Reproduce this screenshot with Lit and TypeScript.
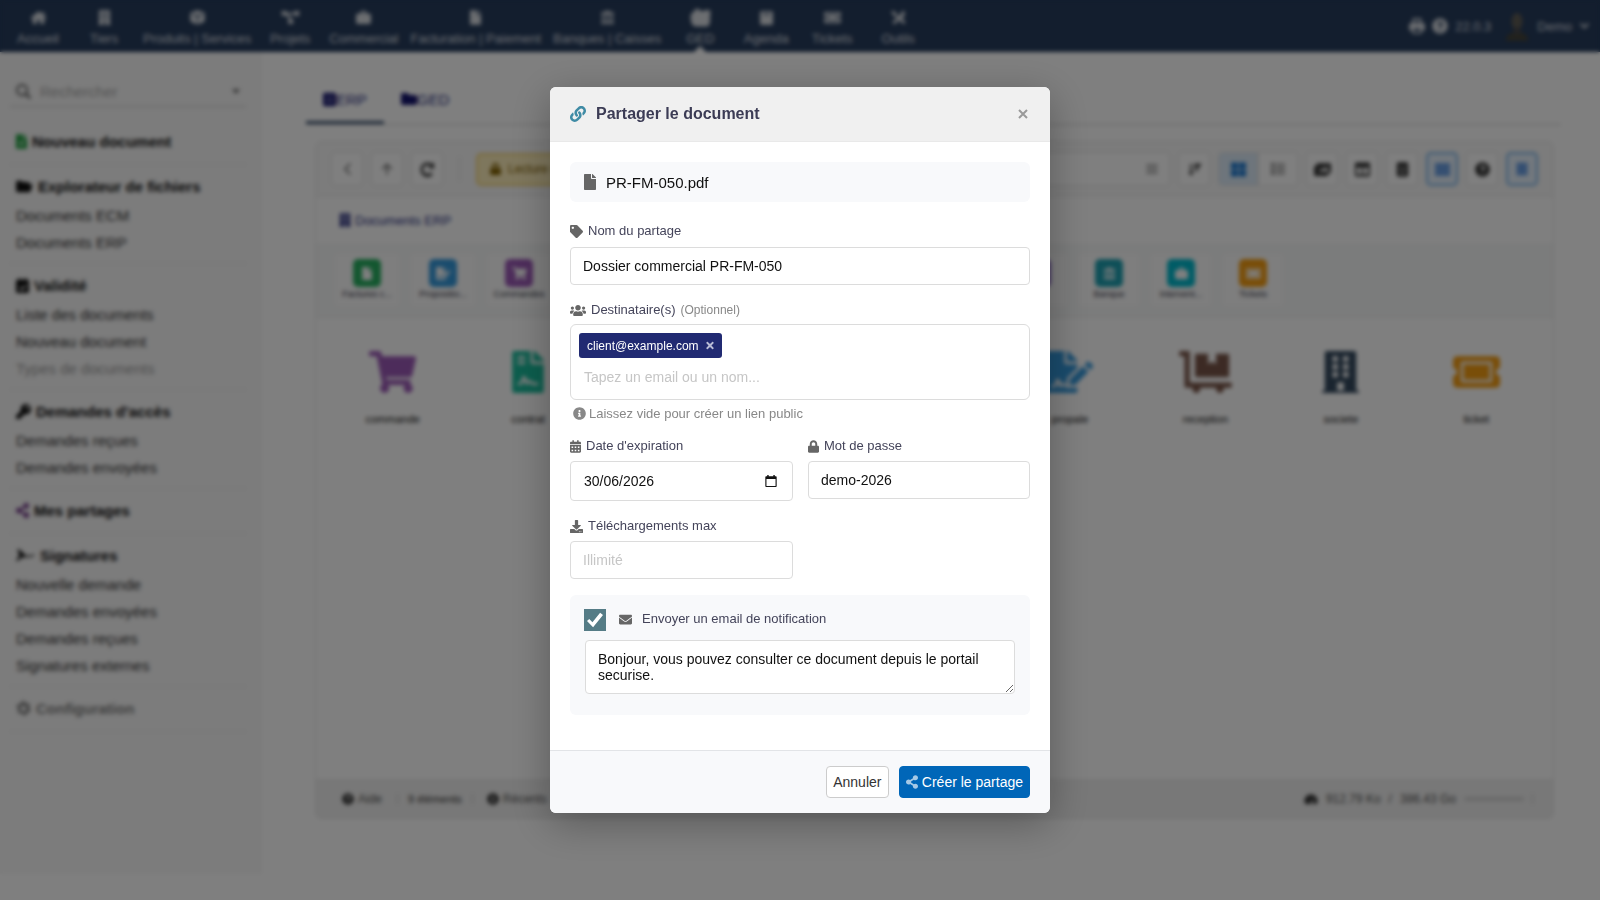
import { LitElement, html, css, svg, nothing } from "lit";
import { customElement, property, state } from "lit/decorators.js";
import { classMap } from "lit/directives/class-map.js";

type Glyph = { w: number; h: number; d: string };

const FILE_FOLD =
  "M377 105L279.100 7c-4.500-4.500-10.600-7-17-7H256v128h128v-6.100c0-6.300-2.500-12.400-7-16.900z";

const GLYPHS: Record<string, Glyph> = {
  link: { w: 512, h: 512, d: "M326.612 185.391c59.747 59.809 58.927 155.698.36 214.59-.11.12-.24.25-.36.37l-67.2 67.2c-59.27 59.27-155.699 59.262-214.96 0-59.27-59.26-59.27-155.7 0-214.96l37.106-37.106c9.84-9.84 26.786-3.3 27.294 10.606.648 17.722 3.826 35.527 9.69 52.721 1.986 5.822.567 12.262-3.783 16.612l-13.087 13.087c-28.026 28.026-28.905 73.66-1.155 101.96 28.024 28.579 74.086 28.749 102.325.51l67.2-67.19c28.191-28.191 28.073-73.757 0-101.83-3.701-3.694-7.429-6.564-10.341-8.569a16.037 16.037 0 0 1-6.947-12.606c-.396-10.567 3.348-21.456 11.698-29.806l21.054-21.055c5.521-5.521 14.182-6.199 20.584-1.731a152.482 152.482 0 0 1 20.522 17.197zM467.547 44.449c-59.261-59.262-155.69-59.27-214.96 0l-67.2 67.2c-.12.12-.25.25-.36.37-58.566 58.892-59.387 154.781.36 214.59a152.454 152.454 0 0 0 20.521 17.196c6.402 4.468 15.064 3.789 20.584-1.731l21.054-21.055c8.35-8.35 12.094-19.239 11.698-29.806a16.037 16.037 0 0 0-6.947-12.606c-2.912-2.005-6.64-4.875-10.341-8.569-28.073-28.073-28.191-73.639 0-101.83l67.2-67.19c28.239-28.239 74.3-28.069 102.325.51 27.75 28.3 26.872 73.934-1.155 101.96l-13.087 13.087c-4.35 4.35-5.769 10.79-3.783 16.612 5.864 17.194 9.042 34.999 9.69 52.721.509 13.906 17.454 20.446 27.294 10.606l37.106-37.106c59.271-59.259 59.271-155.699.001-214.959z" },
  file: { w: 384, h: 512, d: "M224 136V0H24C10.7 0 0 10.7 0 24v464c0 13.3 10.7 24 24 24h336c13.3 0 24-10.7 24-24V160H248c-13.2 0-24-10.8-24-24z" + FILE_FOLD },
  tag: { w: 512, h: 512, d: "M0 252.118V48C0 21.49 21.49 0 48 0h204.118a48 48 0 0 1 33.941 14.059l211.882 211.882c18.745 18.745 18.745 49.137 0 67.882L293.823 497.941c-18.745 18.745-49.137 18.745-67.882 0L14.059 286.059A48 48 0 0 1 0 252.118zM112 64c-26.51 0-48 21.49-48 48s21.49 48 48 48 48-21.49 48-48-21.49-48-48-48z" },
  users: { w: 640, h: 512, d: "M96 224c35.3 0 64-28.7 64-64s-28.7-64-64-64-64 28.7-64 64 28.7 64 64 64zm448 0c35.3 0 64-28.7 64-64s-28.7-64-64-64-64 28.7-64 64 28.7 64 64 64zm32 32h-64c-17.6 0-33.5 7.1-45.1 18.6 40.3 22.1 68.9 62 75.1 109.4h66c17.7 0 32-14.3 32-32v-32c0-35.3-28.7-64-64-64zm-256 0c61.9 0 112-50.1 112-112S381.9 32 320 32 208 82.1 208 144s50.1 112 112 112zm76.8 32h-8.3c-20.8 10-43.9 16-68.5 16s-47.6-6-68.5-16h-8.3C179.6 288 128 339.6 128 403.2V432c0 26.5 21.5 48 48 48h288c26.5 0 48-21.5 48-48v-28.8c0-63.6-51.6-115.2-115.2-115.2zm-223.7-13.4C161.5 263.1 145.6 256 128 256H64c-35.3 0-64 28.7-64 64v32c0 17.7 14.3 32 32 32h65.9c6.3-47.4 34.9-87.3 75.2-109.4z" },
  info: { w: 512, h: 512, d: "M256 8C119.043 8 8 119.083 8 256c0 136.997 111.043 248 248 248s248-111.003 248-248C504 119.083 392.957 8 256 8zm0 110c23.196 0 42 18.804 42 42s-18.804 42-42 42-42-18.804-42-42 18.804-42 42-42zm56 254c0 6.627-5.373 12-12 12h-88c-6.627 0-12-5.373-12-12v-24c0-6.627 5.373-12 12-12h12v-64h-12c-6.627 0-12-5.373-12-12v-24c0-6.627 5.373-12 12-12h64c6.627 0 12 5.373 12 12v100h12c6.627 0 12 5.373 12 12v24z" },
  calendar: { w: 448, h: 512, d: "M0 464c0 26.5 21.5 48 48 48h352c26.5 0 48-21.5 48-48V192H0zM64 256h64v64H64zM192 256h64v64h-64zM320 256h64v64h-64zM64 384h64v64H64zM192 384h64v64h-64zM320 384h64v64h-64zM400 64h-48V16c0-8.8-7.2-16-16-16h-32c-8.800 0-16 7.200-16 16v48H160V16c0-8.800-7.200-16-16-16h-32c-8.800 0-16 7.200-16 16v48H48C21.500 64 0 85.500 0 112v48h448v-48c0-26.500-21.500-48-48-48z" },
  lock: { w: 448, h: 512, d: "M400 224h-24v-72C376 68.2 307.8 0 224 0S72 68.2 72 152v72H48c-26.5 0-48 21.5-48 48v192c0 26.5 21.5 48 48 48h352c26.5 0 48-21.5 48-48V272c0-26.5-21.5-48-48-48zm-104 0H152v-72c0-39.7 32.3-72 72-72s72 32.3 72 72v72z" },
  download: { w: 512, h: 512, d: "M216 0h80c13.3 0 24 10.7 24 24v168h87.7c17.8 0 26.7 21.5 14.1 34.1L269.7 378.3c-7.5 7.5-19.8 7.5-27.3 0L90.1 226.1c-12.6-12.6-3.7-34.1 14.1-34.1H192V24c0-13.3 10.7-24 24-24zm296 376v112c0 13.3-10.7 24-24 24H24c-13.3 0-24-10.7-24-24V376c0-13.3 10.7-24 24-24h146.7l49 49c20.1 20.1 52.5 20.1 72.6 0l49-49H488c13.3 0 24 10.7 24 24zm-124 88c0-11-9-20-20-20s-20 9-20 20 9 20 20 20 20-9 20-20zm64 0c0-11-9-20-20-20s-20 9-20 20 9 20 20 20 20-9 20-20z" },
  envelope: { w: 512, h: 512, d: "M502.3 190.8c3.9-3.1 9.7-.2 9.7 4.7V400c0 26.5-21.5 48-48 48H48c-26.5 0-48-21.5-48-48V195.6c0-5 5.7-7.8 9.7-4.7 22.4 17.4 52.1 39.5 154.1 113.6 21.1 15.4 56.7 47.8 92.2 47.6 35.7.3 72-32.8 92.3-47.6 102-74.1 131.6-96.3 154-113.7zM256 320c23.2.4 56.6-29.2 73.4-41.4 132.7-96.3 142.8-104.7 173.4-128.7 5.8-4.5 9.2-11.5 9.2-18.9v-19c0-26.5-21.5-48-48-48H48c-26.5 0-48 21.5-48 48v19c0 7.4 3.4 14.3 9.2 18.9 30.6 23.9 40.7 32.4 173.4 128.7 16.8 12.2 50.2 41.8 73.4 41.4z" },
  share: { w: 448, h: 512, d: "M352 320c-22.608 0-43.387 7.819-59.79 20.895l-102.486-64.054a96.551 96.551 0 0 0 0-41.683l102.486-64.054C308.613 184.181 329.392 192 352 192c53.019 0 96-42.981 96-96S405.019 0 352 0s-96 42.981-96 96c0 7.158.79 14.13 2.276 20.841L155.79 180.895C139.387 167.819 118.608 160 96 160c-53.019 0-96 42.981-96 96s42.981 96 96 96c22.608 0 43.387-7.819 59.79-20.895l102.486 64.054A96.301 96.301 0 0 0 256 416c0 53.019 42.981 96 96 96s96-42.981 96-96-42.981-96-96-96z" },
  cross: { w: 352, h: 512, d: "M242.72 256l100.07-100.07c12.28-12.28 12.28-32.19 0-44.48l-22.24-22.24c-12.28-12.28-32.19-12.28-44.48 0L176 189.28 75.93 89.21c-12.28-12.28-32.19-12.28-44.48 0L9.21 111.45c-12.28 12.28-12.28 32.19 0 44.48L109.28 256 9.21 356.07c-12.28 12.28-12.28 32.19 0 44.48l22.24 22.24c12.28 12.28 32.2 12.28 44.48 0L176 322.72l100.07 100.07c12.28 12.28 32.2 12.28 44.48 0l22.24-22.24c12.28-12.28 12.28-32.19 0-44.48L242.72 256z" },
  cart: { w: 576, h: 512, d: "M528.12 301.319l47.273-208C578.806 78.301 567.391 64 551.99 64H159.208l-9.166-44.81C147.758 8.021 137.93 0 126.529 0H24C10.745 0 0 10.745 0 24v16c0 13.255 10.745 24 24 24h69.883l70.248 343.435C147.325 417.1 136 435.222 136 456c0 30.928 25.072 56 56 56s56-25.072 56-56c0-15.674-6.447-29.835-16.824-40h209.647C430.447 426.165 424 440.326 424 456c0 30.928 25.072 56 56 56s56-25.072 56-56c0-22.172-12.888-41.332-31.579-50.405l5.517-24.276c3.413-15.018-8.002-29.319-23.403-29.319H218.117l-6.545-32h293.145c11.206 0 20.92-7.754 23.403-18.681z" },
  contract: { w: 384, h: 512, d: "M224 136V0H24C10.7 0 0 10.7 0 24v464c0 13.3 10.7 24 24 24h336c13.3 0 24-10.7 24-24V160H248c-13.2 0-24-10.8-24-24zM64 72c0-4.42 3.58-8 8-8h80c4.42 0 8 3.58 8 8v16c0 4.42-3.58 8-8 8H72c-4.42 0-8-3.58-8-8V72zm0 64c0-4.42 3.58-8 8-8h80c4.42 0 8 3.58 8 8v16c0 4.42-3.58 8-8 8H72c-4.42 0-8-3.58-8-8v-16zm192.81 248H304c8.84 0 16 7.16 16 16s-7.16 16-16 16h-47.19c-16.45 0-31.27-9.14-38.64-23.86-2.95-5.92-8.09-6.52-10.17-6.52s-7.22.59-10.02 6.19l-7.67 15.34a15.986 15.986 0 0 1-14.31 8.84c-.38 0-.75-.02-1.14-.05-6.45-.45-12-4.75-14.03-10.89L144 354.59l-10.61 31.88c-5.89 17.66-22.38 29.53-41 29.53H80c-8.84 0-16-7.16-16-16s7.16-16 16-16h12.39c4.83 0 9.11-3.08 10.64-7.66l18.19-54.64c3.3-9.81 12.44-16.41 22.78-16.41s19.48 6.59 22.77 16.41l13.88 41.64c19.77-16.19 54.05-9.7 66 14.16 2.02 4.06 5.96 6.5 10.16 6.5z" + FILE_FOLD },
  signature: { w: 576, h: 512, d: "M218.17 424.14c-2.95-5.92-8.09-6.52-10.17-6.52s-7.22.59-10.02 6.19l-7.67 15.34c-6.37 12.78-25.03 11.37-29.48-2.09L144 386.59l-10.61 31.88c-5.89 17.66-22.38 29.53-41 29.53H80c-8.84 0-16-7.16-16-16s7.16-16 16-16h12.39c4.83 0 9.11-3.08 10.64-7.66l18.19-54.64c3.3-9.81 12.44-16.41 22.78-16.41s19.48 6.59 22.77 16.41l13.88 41.64c19.75-16.19 54.06-9.7 66 14.16 1.89 3.78 5.49 5.95 9.36 6.26v-82.12l128-127.09V160H248c-13.2 0-24-10.8-24-24V0H24C10.7 0 0 10.7 0 24v464c0 13.3 10.7 24 24 24h336c13.3 0 24-10.7 24-24v-40l-128-.11c-16.12-.31-30.58-9.28-37.83-23.75zM384 121.9c0-6.3-2.5-12.4-7-16.9L279.1 7c-4.5-4.5-10.6-7-17-7H256v128h128v-6.1zm-96 225.06V416h68.99l161.68-162.78-67.88-67.88L288 346.96zm280.54-179.63l-31.87-31.87c-9.94-9.94-26.07-9.94-36.01 0l-27.25 27.25 67.88 67.88 27.25-27.25c9.95-9.94 9.95-26.07 0-36.01z" },
  flatbed: { w: 640, h: 512, d: "M208 320h384c8.8 0 16-7.2 16-16V48c0-8.8-7.2-16-16-16H448v128l-48-32-48 32V32H208c-8.8 0-16 7.2-16 16v256c0 8.8 7.2 16 16 16zm416 64H128V16c0-8.8-7.2-16-16-16H16C7.2 0 0 7.2 0 16v32c0 8.8 7.2 16 16 16h48v368c0 8.8 7.2 16 16 16h82.9c-1.8 5-2.9 10.4-2.9 16 0 26.5 21.5 48 48 48s48-21.5 48-48c0-5.6-1.2-11-2.9-16H451c-1.8 5-2.9 10.4-2.9 16 0 26.5 21.5 48 48 48s48-21.5 48-48c0-5.6-1.2-11-2.9-16H624c8.8 0 16-7.2 16-16v-32c0-8.8-7.2-16-16-16z" },
  building: { w: 448, h: 512, d: "M436 480h-20V24c0-13.300-10.700-24-24-24H56C42.700 0 32 10.700 32 24v456H12c-6.600 0-12 5.400-12 12v20h448v-20c0-6.600-5.400-12-12-12zM128 64h64v64h-64zM256 64h64v64h-64zM128 160h64v64h-64zM256 160h64v64h-64zM128 256h64v64h-64zM256 256h64v64h-64zM184 384h80v96h-80z" },
  ticket: { w: 576, h: 512, d: "M128 160h320v192H128V160zm400 96c0 26.51 21.49 48 48 48v96c0 26.51-21.49 48-48 48H48c-26.51 0-48-21.49-48-48v-96c26.51 0 48-21.49 48-48s-21.49-48-48-48v-96c0-26.51 21.49-48 48-48h480c26.51 0 48 21.49 48 48v96c-26.51 0-48 21.49-48 48zm-48-104c0-13.255-10.745-24-24-24H120c-13.255 0-24 10.745-24 24v208c0 13.255 10.745 24 24 24h336c13.255 0 24-10.745 24-24V152z" },
  home: { w: 576, h: 512, d: "M288 40L10 270l30 36 48-40v190c0 13 11 24 24 24h124V340h104v140h124c13 0 24-11 24-24V266l48 40 30-36-78-64V64h-64v76z" },
  cube: { w: 512, h: 512, d: "M240 8L40 84c-20 8-32 26-32 46v230c0 18 10 35 26 43l206 103V240L80 180l20-44 156 60 156-60 20 44-160 60v266l206-103c16-8 26-25 26-43V130c0-20-12-38-32-46L272 8c-10-4-22-4-32 0z" },
  project: { w: 640, h: 512, d: "M20 30h170v66h260V30h170v170H450v-40H262l86 150h62v170H240V310h30L190 190v10H20z" },
  suitcase: { w: 512, h: 512, d: "M160 120V72c0-26 22-48 48-48h96c26 0 48 22 48 48v48h96c36 0 64 28 64 64v232c0 36-28 64-64 64H64c-36 0-64-28-64-64V184c0-36 28-64 64-64zm56 0h80V80h-80z" },
  bank: { w: 512, h: 512, d: "M256 20L30 100v50h452v-50zM70 180h70v200H70zM221 180h70v200h-70zM372 180h70v200h-70zM40 400h432v80H40z" },
  agenda: { w: 448, h: 512, d: "M48 40h352c26 0 48 22 48 48v376c0 26-22 48-48 48H48c-26 0-48-22-48-48V88c0-26 22-48 48-48zM100 130v40h248v-40z" },
  tools: { w: 512, h: 512, d: "M60 20l130 90 10 60 60 50 150-200 60 30-30 70 60 20-120 140 120 140-70 70-160-150L130 492l-90-70 160-150-60-70-60-10L10 70z" },
  gedStack: { w: 576, h: 512, d: "M60 110h40l30-60 60-40 60 20 30 50h110l30-30h90l56 30-16 180 0 150-60 90H150c-60-10-110-60-120-130L10 220z" },
  folders: { w: 576, h: 512, d: "M48 60h130l48 44h180c26 0 48 22 48 48v30l110 0-60 220c-6 30-30 50-60 50H48c-26 0-48-22-48-48V108c0-26 22-48 48-48z" },
  folder: { w: 512, h: 512, d: "M464 128H272l-64-64H48C21.490 64 0 85.490 0 112v288c0 26.510 21.490 48 48 48h416c26.510 0 48-21.490 48-48V176c0-26.510-21.490-48-48-48z" },
  database: { w: 448, h: 512, d: "M64 20h320c36 0 64 26 64 60v350c0 34-28 62-64 62H64c-36 0-64-28-64-62V80c0-34 28-60 64-60zM90 150v30h268v-30zM90 300v30h268v-30z" },
  fileAdd: { w: 384, h: 512, d: "M224 136V0H24C10.7 0 0 10.7 0 24v464c0 13.3 10.7 24 24 24h336c13.3 0 24-10.7 24-24V160H248c-13.2 0-24-10.8-24-24zM170 230h44v70h70v44h-70v70h-44v-70h-70v-44h70z" + FILE_FOLD },
  calCheck: { w: 448, h: 512, d: "M48 60h48V0h60v60h136V0h60v60h48c26 0 48 22 48 48v356c0 26-22 48-48 48H48c-26 0-48-22-48-48V108c0-26 22-48 48-48zM200 440l170-170-36-36-134 134-70-70-36 36z" },
  key: { w: 512, h: 512, d: "M512 176C512 273 433 352 336 352c-11 0-22-1-33-3l-24 27c-4 5-11 8-18 8h-37v40c0 13-11 24-24 24h-40v40c0 13-11 24-24 24H24c-13 0-24-11-24-24v-78c0-6 3-12 7-17l162-162c-6-17-9-36-9-55C160 79 239 0 336 0s176 79 176 176zM336 128c0 27 21 48 48 48s48-21 48-48-21-48-48-48-48 21-48 48z" },
  scribble: { w: 640, h: 512, d: "M40 50l60-10 190 170 50 70 60-50 70 40 140-60 20 40-160 70-80-40-90 60-70-40-190 150-40-30 110-160z" },
  gear: { w: 512, h: 512, d: "M210 10h92l14 60 50 24 56-26 60 74-36 56 8 60 50 40-40 84-62-2-40 40-12 70-92 4-34-60-52-20-60 20-60-74 30-54-10-56-56-38 34-90 66 0 42-44zM256 160a96 96 0 1 0 0 192 96 96 0 1 0 0-192z" },
  help: { w: 512, h: 512, d: "M256 8a248 248 0 1 0 0 496 248 248 0 1 0 0-496zM170 200c4-50 40-84 92-84 50 0 90 32 90 80 0 50-62 66-66 102h-60c0-64 60-70 60-100 0-34-56-30-60 8zM225 340h62v56h-62z" },
  print: { w: 512, h: 512, d: "M110 10h292v150h40c38 0 66 28 66 66v170H410v106H102V396H4V226c0-38 28-66 66-66h40zM170 70v90h172V70zM160 340v104h192V340z" },
  cloud: { w: 512, h: 512, d: "M70 440C20 400 0 340 20 270 50 160 140 90 256 90s206 70 236 180c20 70 0 130-50 170H320l20-190-60 60-24 130z" },
  chevronLeft: { w: 320, h: 512, d: "M240 40l44 44-172 172 172 172-44 44L24 256z" },
  arrowUp: { w: 448, h: 512, d: "M224 40l200 200-44 44-124-124v310h-64V160L68 284l-44-44z" },
  refresh: { w: 512, h: 512, d: "M400 60l80-40v200H280l80-70c-90-80-260-20-260 110 0 140 170 200 270 100l70 70C280 600 20 490 20 256 20 50 240-50 400 60z" },
  list: { w: 512, h: 512, d: "M20 60h472v70H20zM20 220h472v70H20zM20 380h472v70H20z" },
  sort: { w: 512, h: 512, d: "M90 40h70v320h70L120 500 10 360h80zM260 30h250v80L360 200h-100zM260 240h150v70H260z" },
  grid: { w: 512, h: 512, d: "M0 20h240v220H0zM272 20h240v220H272zM0 272h240v220H0zM272 272h240v220H272z" },
  listItems: { w: 512, h: 512, d: "M0 40h130v110H0zM180 60h332v70H180zM0 200h130v110H0zM180 220h332v70H180zM0 360h130v110H0zM180 380h332v70H180z" },
  images: { w: 576, h: 512, d: "M130 40h400c26 0 46 20 46 46v260c0 26-20 46-46 46H470v40c0 26-20 46-46 46H46c-26 0-46-20-46-46V170c0-26 20-46 46-46h40V86c0-26 18-46 44-46zM150 320h370L410 150l-90 110-60-50z" },
  windowIcon: { w: 512, h: 512, d: "M48 20h416c26 0 48 22 48 48v376c0 26-22 48-48 48H48c-26 0-48-22-48-48V68c0-26 22-48 48-48zM60 190v230h170V190zM282 190v230h170V190z" },
  trash: { w: 448, h: 512, d: "M60 10h330l30 50v380c0 36-28 62-64 62H92c-36 0-64-26-64-62V60zM130 180v80h60v-80zM260 180v80h60v-80zM150 360v50h150v-50z" },
  table: { w: 512, h: 512, d: "M0 40h512v130H0zM0 190h512v130H0zM0 340h512v130H0z" },
  panel: { w: 448, h: 512, d: "M20 20h408v130H20zM20 170h408v170H20zM20 360h408v130H20z" },
  search: { w: 512, h: 512, d: "M505 442.700L405.300 343c-4.500-4.500-10.600-7-17-7H372c27.600-35.300 44-79.700 44-128C416 93.100 322.900 0 208 0S0 93.100 0 208s93.100 208 208 208c48.300 0 92.700-16.400 128-44v16.300c0 6.400 2.500 12.500 7 17l99.700 99.700c9.400 9.400 24.600 9.400 33.900 0l28.300-28.300c9.400-9.400 9.400-24.600.1-34zM208 352a144 144 0 1 1 0-288 144 144 0 0 1 0 288z" },
  caret: { w: 320, h: 512, d: "M0 170h320L160 350z" },
  chevronDown: { w: 448, h: 512, d: "M30 180l54-60 140 150 140-150 54 60-194 204z" },
  dateBox: { w: 512, h: 512, d: "M96 0h60v48h200V0h60v48h48c20 0 34 14 34 34v396c0 20-14 34-34 34H48c-20 0-34-14-34-34V82c0-20 14-34 34-34h48zM62 170v294h388V170z" },
};

@customElement("ui-icon")
export class UiIcon extends LitElement {
  @property() name = "file";
  @property({ type: Number }) size = 14;

  static styles = css`
    :host { display: inline-flex; flex: none; }
    svg { display: block; fill: currentColor; fill-rule: evenodd; }
  `;

  render() {
    const g = GLYPHS[this.name];
    if (!g) return nothing;
    return html`<svg aria-hidden="true" height=${this.size} width=${Math.round((this.size * g.w) / g.h)}
      viewBox="0 0 ${g.w} ${g.h}">${svg`<path d=${g.d}></path>`}</svg>`;
  }
}

const NAV: [string, string][] = [
  ["home", "Accueil"], ["building", "Tiers"], ["cube", "Produits | Services"], ["project", "Projets"],
  ["suitcase", "Commercial"], ["file", "Facturation | Paiement"], ["bank", "Banques | Caisses"],
  ["gedStack", "GED"], ["agenda", "Agenda"], ["ticket", "Tickets"], ["tools", "Outils"],
];

@customElement("app-topbar")
export class AppTopbar extends LitElement {
  static styles = css`
    :host { display: flex; justify-content: space-between; height: 52px; padding: 0 10px 0 5px; background: #263c5c; color: #d8dce2; font-size: 13px; }
    nav { display: flex; }
    a { color: inherit; text-decoration: none; }
    .entry { display: flex; flex-direction: column; align-items: center; min-width: 66px; box-sizing: border-box; padding: 9px 6px 0; line-height: 16px; white-space: nowrap; }
    .glyph { display: flex; align-items: center; height: 16px; margin-bottom: 6px; }
    .entry.active::after { content: ""; border: 6px solid transparent; border-top: 0; border-bottom-color: #fff; margin-top: -1px; }
    .right { display: flex; align-items: center; gap: 7px; }
    .avatar { width: 26px; height: 32px; margin-left: 6px; display: block; }
  `;

  render() {
    return html`
      <nav>
        ${NAV.map(([icon, label]) => html`
          <a href="#" class=${classMap({ entry: true, active: label === "GED" })}>
            <span class="glyph"><ui-icon name=${icon} size=${label === "GED" ? 19 : 15}></ui-icon></span>
            <span>${label}</span>
          </a>`)}
      </nav>
      <div class="right">
        <ui-icon name="print" size="16"></ui-icon>
        <ui-icon name="help" size="16"></ui-icon>
        <span>22.0.3</span>
        <svg class="avatar" viewBox="0 0 28 32" aria-hidden="true">
          <ellipse cx="14" cy="11" rx="6" ry="9" fill="#5f5c55"></ellipse>
          <path d="M2 32c0-7 6-9 12-9s12 2 12 9z" fill="#454338"></path>
          <path d="M10 18h8v7h-8z" fill="#45464a"></path>
        </svg>
        <span>Demo</span>
        <ui-icon name="chevronDown" size="12"></ui-icon>
      </div>
    `;
  }
}

type Section = { icon: string; tone?: string; title: string; items?: string[] };

const SECTIONS: Section[] = [
  { icon: "fileAdd", tone: "green", title: "Nouveau document" },
  { icon: "folders", title: "Explorateur de fichiers", items: ["Documents ECM", "Documents ERP"] },
  { icon: "calCheck", title: "Validité", items: ["Liste des documents", "Nouveau document", "Types de documents"] },
  { icon: "key", title: "Demandes d'accès", items: ["Demandes reçues", "Demandes envoyées"] },
  { icon: "share", tone: "violet", title: "Mes partages" },
  { icon: "scribble", title: "Signatures", items: ["Nouvelle demande", "Demandes envoyées", "Demandes reçues", "Signatures externes"] },
  { icon: "gear", tone: "muted", title: "Configuration" },
];

@customElement("app-sidebar")
export class AppSidebar extends LitElement {
  static styles = css`
    :host { display: block; width: 261px; box-sizing: border-box; flex: none; background: #f8f8f8; border-right: 1px solid #efefef; padding: 24px 14px 0 10px; font-size: 15px; color: #333; }
    .search { display: flex; align-items: center; gap: 9px; height: 30px; margin-bottom: 13px; padding: 0 6px; border-bottom: 1px solid #ccc; color: #666; }
    input { flex: 1; min-width: 0; border: 0; padding: 0; background: none; font: inherit; font-size: 15px; }
    input::placeholder { color: #a8a8a8; }
    section { padding: 8px 6px 7px; border-bottom: 1px solid #ececec; }
    .title { display: flex; align-items: center; gap: 5px; height: 27px; margin: 0 0 2px; font-size: 15px; font-weight: bold; color: #111; white-space: nowrap; }
    .title.muted { color: #808080; }
    .green { color: #1e9e3e; }
    .violet { color: #6c3082; }
    a { display: block; line-height: 27px; color: #333; text-decoration: none; }
    a.off { color: #9a9a9a; }
  `;

  render() {
    return html`
      <div class="search">
        <ui-icon name="search" size="15"></ui-icon>
        <input type="text" placeholder="Rechercher" aria-label="Rechercher" />
        <ui-icon name="caret" size="13"></ui-icon>
      </div>
      ${SECTIONS.map((s) => html`
        <section>
          <h2 class=${classMap({ title: true, muted: s.tone === "muted" })}>
            <ui-icon class=${s.tone ?? ""} name=${s.icon} size="15"></ui-icon>${s.title}
          </h2>
          ${(s.items ?? []).map((i) => html`<a href="#" class=${i.startsWith("Types") ? "off" : ""}>${i}</a>`)}
        </section>`)}
    `;
  }
}

type Tile = { icon?: string; label?: string; color?: string; wide?: boolean };

const TILES: Tile[] = [
  { icon: "file", label: "Factures c...", color: "#27ae60", wide: true },
  { icon: "signature", label: "Propositio...", color: "#3498db", wide: true },
  { icon: "cart", label: "Commandes", color: "#9b59b6", wide: true },
  { wide: true }, { wide: true }, { wide: true }, {}, {}, {},
  { color: "#8e6fc8" },
  { icon: "bank", label: "Banque", color: "#1d9fb0" },
  { icon: "suitcase", label: "Intervent...", color: "#00b8cc" },
  { icon: "ticket", label: "Tickets", color: "#f39c12" },
];

const FOLDERS: Tile[] = [
  { icon: "cart", label: "commande", color: "#9b59b6" },
  { icon: "contract", label: "contrat", color: "#1abc9c" },
  {}, {}, {},
  { icon: "signature", label: "propale", color: "#3498db" },
  { icon: "flatbed", label: "reception", color: "#795548" },
  { icon: "building", label: "societe", color: "#34495e" },
  { icon: "ticket", label: "ticket", color: "#f39c12" },
];

@customElement("app-explorer")
export class AppExplorer extends LitElement {
  static styles = css`
    :host { display: flex; flex-direction: column; flex: 1; min-width: 0; padding: 23px 39px 81px 45px; background: #fff; }
    button { font: inherit; color: #333; background: #fff; border: 1px solid #e2e2e2; border-radius: 5px; padding: 0; display: flex; align-items: center; justify-content: center; box-sizing: border-box; }
    .tabs { display: flex; border-bottom: 1px solid #ccc; height: 49px; font-size: 15px; }
    .tab { display: flex; align-items: center; padding: 2px 17px 0; border-bottom: 3px solid transparent; color: #2a2f80; text-decoration: none; }
    .tab.on { border-bottom-color: #3b5170; }
    .tab ui-icon { color: #14146e; }
    .panel { display: flex; flex-direction: column; flex: 1; margin: 16px 7px 0 9px; border: 1px solid #e6e6e6; border-radius: 6px; overflow: hidden; }
    .toolbar { display: flex; align-items: center; gap: 8px; height: 54px; padding: 0 15px; background: #f8f8f8; border-bottom: 1px solid #e8e8e8; }
    .toolbar button { width: 32px; height: 34px; }
    .toolbar button.dim { color: #777; }
    .toolbar button.on { border: 2px solid #7ab4e8; background: #e6f1fc; color: #5a94e0; }
    .rule { width: 1px; height: 24px; background: #e0e0e0; margin: 0 8px; }
    .badge { display: flex; align-items: center; gap: 7px; height: 33px; box-sizing: border-box; padding: 0 12px; border: 2px solid #f5d77a; border-radius: 5px; background: #fdeebb; color: #806000; font-size: 12px; white-space: nowrap; }
    .find { flex: 1; display: flex; align-items: center; justify-content: flex-end; height: 34px; box-sizing: border-box; padding-right: 11px; border: 1px solid #e2e2e2; border-radius: 5px; background: #fff; color: #777; }
    .switch { display: flex; margin: 0; }
    .toolbar .switch button { width: 40px; border-radius: 0 5px 5px 0; color: #777; }
    .toolbar .switch button.sel { border-radius: 5px 0 0 5px; background: #dcebf8; color: #1c78d0; }
    .crumb { display: flex; align-items: center; gap: 4px; height: 46px; padding: 0 23px; color: #2a2f80; font-size: 13px; }
    .tiles { display: flex; gap: 12px; height: 75px; box-sizing: border-box; align-items: center; padding: 0 19px; background: #f7f8f8; border-bottom: 1px solid #eaecec; }
    .tile { width: 60px; height: 52px; flex: none; display: flex; flex-direction: column; align-items: center; gap: 2px; box-sizing: border-box; padding-top: 5px; border-radius: 4px; font-size: 9px; line-height: 11px; color: #334; white-space: nowrap; }
    .tile.wide { width: 64px; }
    .tile.full { background: #fcfcfc; }
    .chip { display: flex; align-items: center; justify-content: center; width: 28px; height: 28px; border-radius: 5px; color: #fff; }
    .folders { flex: 1; display: grid; grid-template-columns: repeat(9, 1fr); gap: 12px; align-content: start; padding: 33px 15px; font-size: 11px; color: #111; }
    .folder { display: flex; flex-direction: column; align-items: center; gap: 19px; line-height: 14px; }
    .status { display: flex; align-items: center; gap: 10px; height: 38px; padding: 0 20px 0 26px; background: #f0f0f0; border-top: 1px solid #e8e8e8; font-size: 12px; color: #555; }
    .status span { display: flex; align-items: center; gap: 4px; }
    .status ui-icon { color: #333; }
    .status .small { font-size: 11px; color: #333; }
    .tick { width: 1px; height: 10px; background: #ccc; }
    .status .pair { margin: 0 5px 0 0; }
    .status .recent { margin-left: 4px; }
    .quota { display: flex; align-items: center; gap: 8px; margin-left: auto; }
    .meter { width: 60px; height: 4px; border-radius: 2px; background: #d4d4d4; }
  `;

  render() {
    return html`
      <div class="tabs">
        <a class="tab on" href="#"><ui-icon name="database" size="15"></ui-icon>ERP</a>
        <a class="tab" href="#"><ui-icon name="folder" size="16"></ui-icon>GED</a>
      </div>
      <div class="panel">
        <div class="toolbar">
          <button class="dim" aria-label="Retour"><ui-icon name="chevronLeft" size="14"></ui-icon></button>
          <button class="dim" aria-label="Dossier parent"><ui-icon name="arrowUp" size="14"></ui-icon></button>
          <button aria-label="Actualiser"><ui-icon name="refresh" size="15"></ui-icon></button>
          <div class="rule"></div>
          <div class="badge"><ui-icon name="lock" size="12"></ui-icon>Lecture seule</div>
          <div class="find"><ui-icon name="list" size="12"></ui-icon></div>
          <button aria-label="Trier"><ui-icon name="sort" size="13"></ui-icon></button>
          <div class="switch">
            <button class="sel" aria-label="Grille"><ui-icon name="grid" size="15"></ui-icon></button>
            <button aria-label="Liste"><ui-icon name="listItems" size="14"></ui-icon></button>
          </div>
          <button aria-label="Images"><ui-icon name="images" size="15"></ui-icon></button>
          <button aria-label="Volets"><ui-icon name="windowIcon" size="15"></ui-icon></button>
          <button aria-label="Corbeille"><ui-icon name="trash" size="15"></ui-icon></button>
          <button class="on" aria-label="Raccourcis"><ui-icon name="table" size="15"></ui-icon></button>
          <button aria-label="Aide"><ui-icon name="help" size="15"></ui-icon></button>
          <button class="on" aria-label="Détails"><ui-icon name="panel" size="14"></ui-icon></button>
        </div>
        <div class="crumb"><ui-icon name="building" size="14"></ui-icon>Documents ERP</div>
        <div class="tiles">
          ${TILES.map((t) => html`
            <div class=${classMap({ tile: true, wide: !!t.wide, full: !!t.color })}>
              ${t.color ? html`<div class="chip" style="background:${t.color}">
                ${t.icon ? html`<ui-icon name=${t.icon} size="13"></ui-icon>` : nothing}</div>` : nothing}
              ${t.label ?? nothing}
            </div>`)}
        </div>
        <div class="folders">
          ${FOLDERS.map((f) => html`
            <div class="folder">
              ${f.icon ? html`<ui-icon style="color:${f.color}" name=${f.icon} size="42"></ui-icon>` : nothing}
              ${f.label ?? nothing}
            </div>`)}
        </div>
        <div class="status">
          <span class="pair"><ui-icon name="help" size="12"></ui-icon>Aide</span>
          <div class="tick"></div>
          <span class="small">9 éléments</span>
          <div class="tick"></div>
          <span class="recent"><ui-icon name="info" size="12"></ui-icon>Récents</span>
          <div class="quota">
            <ui-icon name="cloud" size="14"></ui-icon>
            <span>912.79 Ko</span><span>/</span><span>386.43 Go</span>
            <div class="meter"></div>
            <div class="tick"></div>
          </div>
        </div>
      </div>
    `;
  }
}

@customElement("share-dialog")
export class ShareDialog extends LitElement {
  @state() private recipients = ["client@example.com"];

  static styles = css`
    :host { position: fixed; inset: 0; display: flex; align-items: center; justify-content: center; background: rgba(0, 0, 0, 0.5); backdrop-filter: blur(2px); }
    .dialog { width: 500px; max-width: 95vw; border-radius: 6px; overflow: hidden; background: #fff; box-shadow: 0 10px 40px rgba(0, 0, 0, 0.3); }
    header { display: flex; align-items: center; gap: 10px; height: 54px; padding: 0 20px; background: #f0f0f0; border-bottom: 1px solid #e9e9e9; }
    header ui-icon.link { color: #3f8ba5; }
    h1 { flex: 1; margin: 0; font-size: 16px; line-height: 20px; color: #3c3c55; }
    button { font: inherit; cursor: pointer; }
    .close, .drop { display: flex; padding: 0; border: 0; background: none; color: #999; }
    .close { padding: 0 2px; }
    .body { display: flex; flex-direction: column; padding: 20px 20px 35px; }
    .doc { display: flex; align-items: center; gap: 10px; height: 40px; padding: 0 14px; border-radius: 6px; background: #f8f9fb; font-size: 15px; color: #111; }
    ui-icon { color: #666; }
    .label { display: flex; align-items: center; gap: 5px; height: 16px; margin: 21px 0 8px; font-size: 13px; line-height: 16px; color: #44445a; }
    .label.near { margin: 17px 0 6px; }
    .opt { font-size: 12px; color: #888; }
    input.field, .date, textarea { box-sizing: border-box; width: 100%; border: 1px solid #dcdcdc; border-radius: 4px; background: #fff; color: #111; font-family: inherit; font-size: 14px; line-height: 16px; }
    input.field { display: block; height: 38px; padding: 0 12px; }
    input::placeholder { color: #c6c6c6; }
    .date { display: flex; align-items: center; height: 40px; padding: 0 15px 0 13px; }
    .date input { flex: 1; min-width: 0; padding: 0; border: 0; font: inherit; color: inherit; }
    .date button { display: flex; padding: 0; border: 0; background: none; }
    .date ui-icon { color: #111; }
    .people { display: flex; flex-direction: column; align-items: flex-start; height: 76px; box-sizing: border-box; padding: 8px; border: 1px solid #dcdcdc; border-radius: 6px; gap: 10px; }
    .chip { display: flex; align-items: center; gap: 7px; height: 25px; padding: 0 8px; border-radius: 3px; background: #212a72; color: #fff; font-size: 12px; }
    .chip ui-icon { color: #b9bcd6; }
    .people input { width: 100%; box-sizing: border-box; height: 18px; padding: 0 5px; border: 0; font: inherit; font-size: 14px; }
    .hint { display: flex; align-items: center; gap: 3px; height: 16px; margin: 5px 0 0 3px; font-size: 13px; color: #888; }
    .hint ui-icon { color: #888; }
    .row { display: grid; grid-template-columns: 1fr 1fr; column-gap: 15px; align-items: start; }
    .row .label { margin: 17px 0 7px; }
    .notify { margin-top: 16px; padding: 14px 14px 21px; border-radius: 6px; background: #f8f9fb; }
    .check { display: flex; align-items: flex-start; gap: 13px; }
    .check label { display: flex; align-items: center; gap: 10px; font-size: 13px; line-height: 20px; color: #44445a; }
    .check input { appearance: none; margin: 0; width: 22px; height: 22px; background: #557c86; display: grid; place-items: center; }
    .check input:checked::before { content: ""; width: 16px; height: 16px; background: #fff; clip-path: polygon(0 56%, 14% 44%, 34% 64%, 82% 4%, 100% 18%, 38% 96%); }
    textarea { display: block; height: 54px; width: calc(100% - 2px); margin: 9px 1px 0; padding: 10px 12px; resize: both; overflow: auto; }
    footer { display: flex; align-items: center; justify-content: flex-end; gap: 10px; height: 62px; border-top: 1px solid #e2e4e7; padding: 0 20px; background: #f8f9fb; font-size: 14px; }
    footer button { display: flex; align-items: center; justify-content: center; gap: 4px; min-width: 63px; height: 32px; padding: 0 6px; border: 1px solid #ccc; border-radius: 4px; background: #fff; color: #333; }
    footer .primary { border-color: #0066b8; background: #0066b8; color: #fff; }
    footer .primary ui-icon { color: #a6c9e6; }
  `;

  render() {
    return html`
      <div class="dialog" role="dialog" aria-labelledby="title">
        <header>
          <ui-icon class="link" name="link" size="16"></ui-icon>
          <h1 id="title">Partager le document</h1>
          <button class="close" aria-label="Fermer">
            <svg width="10" height="10" viewBox="0 0 10 10" aria-hidden="true">
              <path d="M1 1l8 8M9 1L1 9" stroke="currentColor" stroke-width="2" fill="none"></path>
            </svg>
          </button>
        </header>
        <div class="body">
          <div class="doc"><ui-icon name="file" size="16"></ui-icon>PR-FM-050.pdf</div>
          <label class="label" for="name"><ui-icon name="tag" size="13"></ui-icon>Nom du partage</label>
          <input id="name" class="field" type="text" value="Dossier commercial PR-FM-050" />
          <label class="label near" for="to"><ui-icon name="users" size="13"></ui-icon>Destinataire(s)
            <span class="opt">(Optionnel)</span></label>
          <div class="people">
            ${this.recipients.map((r) => html`
              <span class="chip">${r}
                <button class="drop" aria-label="Retirer"
                  @click=${() => (this.recipients = this.recipients.filter((x) => x !== r))}>
                  <ui-icon name="cross" size="11"></ui-icon>
                </button>
              </span>`)}
            <input id="to" type="text" placeholder="Tapez un email ou un nom..." />
          </div>
          <div class="hint"><ui-icon name="info" size="13"></ui-icon>Laissez vide pour créer un lien public</div>
          <div class="row">
            <div>
              <label class="label" for="date"><ui-icon name="calendar" size="13"></ui-icon>Date d'expiration</label>
              <div class="date">
                <input id="date" type="text" value="30/06/2026" />
                <button aria-label="Ouvrir le calendrier"><ui-icon name="dateBox" size="12"></ui-icon></button>
              </div>
            </div>
            <div>
              <label class="label" for="pass"><ui-icon name="lock" size="13"></ui-icon>Mot de passe</label>
              <input id="pass" class="field" type="text" value="demo-2026" />
            </div>
            <div>
              <label class="label" for="max"><ui-icon name="download" size="13"></ui-icon>Téléchargements max</label>
              <input id="max" class="field" type="text" placeholder="Illimité" />
            </div>
          </div>
          <div class="notify">
            <div class="check">
              <input id="mail" type="checkbox" checked />
              <label for="mail"><ui-icon name="envelope" size="13"></ui-icon>Envoyer un email de notification</label>
            </div>
            <textarea aria-label="Message" .value=${"Bonjour, vous pouvez consulter ce document depuis le portail securise."}></textarea>
          </div>
        </div>
        <footer>
          <button>Annuler</button>
          <button class="primary"><ui-icon name="share" size="14"></ui-icon>Créer le partage</button>
        </footer>
      </div>
    `;
  }
}

@customElement("app-root")
export class AppRoot extends LitElement {
  static styles = css`
    :host { display: flex; flex-direction: column; min-height: 100vh; background: #fff; font-family: "Liberation Sans", Arial, sans-serif; }
    .main { display: flex; flex: 1; }
    app-sidebar { margin-bottom: 26px; }
  `;

  render() {
    return html`
      <app-topbar></app-topbar>
      <div class="main"><app-sidebar></app-sidebar><app-explorer></app-explorer></div>
      <share-dialog></share-dialog>
    `;
  }
}
